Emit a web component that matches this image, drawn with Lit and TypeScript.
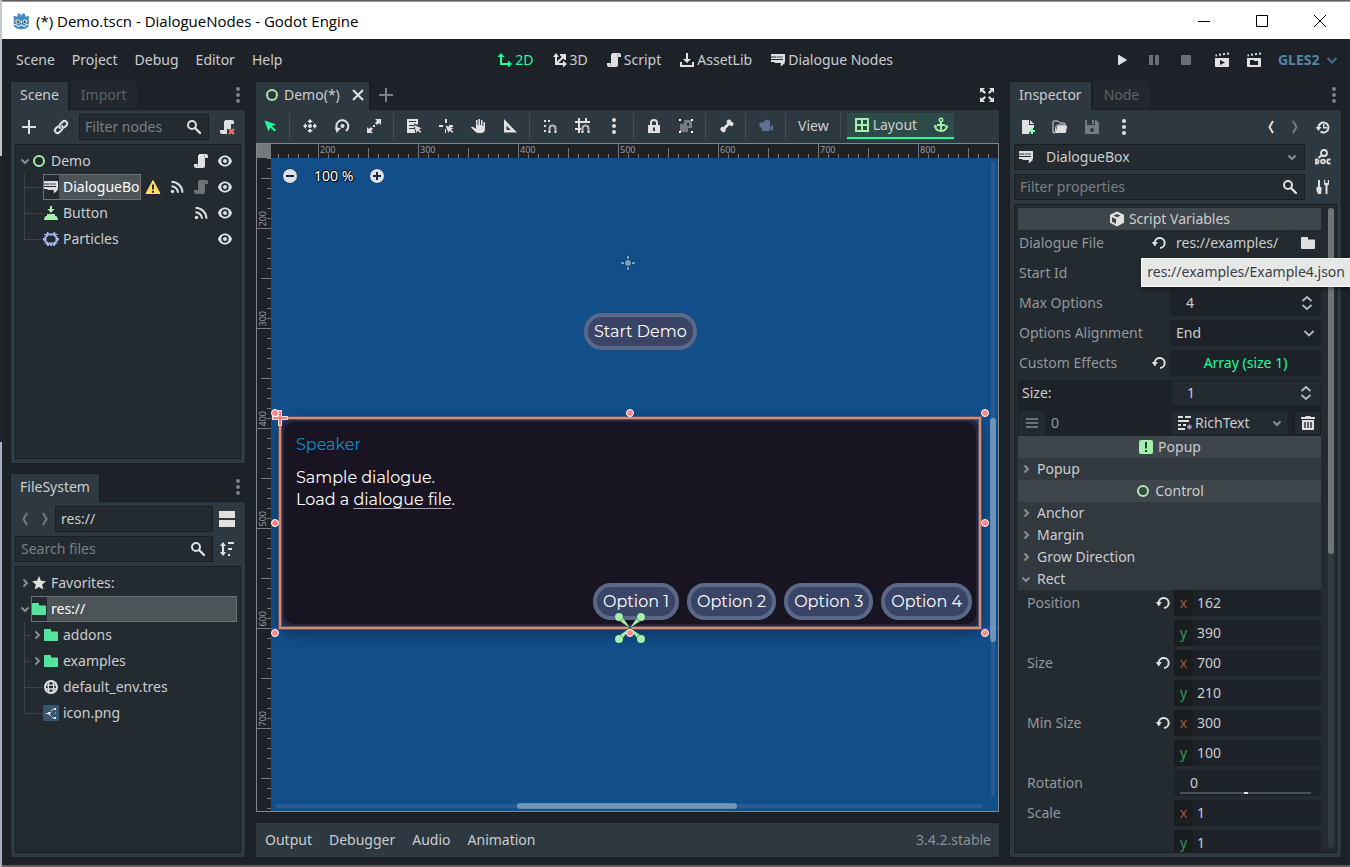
import { LitElement, html, svg, css, nothing, TemplateResult, SVGTemplateResult } from "lit";
import { customElement, state } from "lit/decorators.js";
import { classMap } from "lit/directives/class-map.js";

const W = "#e0e0e0";
const G = "#a5efac";

const icons: Record<string, SVGTemplateResult> = {
  plus: svg`<path d="M7 1h2v6h6v2H9v6H7V9H1V7h6z" fill=${W}/>`,
  link: svg`<g fill="none" stroke=${W} stroke-width="2" stroke-linecap="round"><path d="M7 9a2.6 2.6 0 0 1 0-3.600l2.600-2.600a2.600 2.600 0 0 1 3.700 3.700L11.500 8.200"/><path d="M9 7a2.600 2.600 0 0 1 0 3.600l-2.600 2.600a2.600 2.600 0 0 1-3.700-3.700l1.800-1.700"/></g>`,
  search: svg`<circle cx="6" cy="6" r="4" fill="none" stroke=${W} stroke-width="2"/><path d="M9 9l5 5" stroke=${W} stroke-width="2.400" stroke-linecap="round"/>`,
  script: svg`<path d="M6 1v1c-.550 0-1 .450-1 1v8H1v2c0 1.100.900 2 2 2h7c1.100 0 2-.900 2-2V5h3V3c0-1.100-.900-2-2-2z" fill=${W}/><path d="M11 2v3h1V3c0-.600.400-1 1-1zM4 11v2c0 .600-.400 1-1 1h2v-3z" fill="#a8abad"/>`,
  scriptRemove: svg`<path d="M6 1v1c-.550 0-1 .450-1 1v8H1v2c0 1.100.900 2 2 2h5v-5h4V5h3V3c0-1.100-.900-2-2-2z" fill=${W}/><path d="M10 10l5 5M15 10l-5 5" stroke="#ff7070" stroke-width="2"/>`,
  eye: svg`<path fill-rule="evenodd" d="M8 2.500C4.700 2.500 2 4.800 1 8c1 3.200 3.700 5.500 7 5.500s6-2.300 7-5.500c-1-3.200-3.700-5.500-7-5.500zm0 1.800a3.700 3.700 0 1 1 0 7.400 3.700 3.700 0 0 1 0-7.400z" fill=${W}/><circle cx="8" cy="8" r="2" fill=${W}/>`,
  signal: svg`<circle cx="3.500" cy="12.500" r="1.700" fill=${W}/><path d="M2 7.500a6.500 6.500 0 0 1 6.500 6.500M2 3a11 11 0 0 1 11 11" transform="translate(.5 -.2)" fill="none" stroke=${W} stroke-width="2"/>`,
  warning: svg`<path d="M8 1.500L15 14.500H1z" fill="#ffdd65" stroke="#ffdd65" stroke-linejoin="round"/><path d="M7 5.500h2v5H7zM7 11.700h2v2H7z" fill="#2a2f33"/>`,
  dialogue: svg`<path d="M1.500 2h13c.300 0 .500.200.500.500V10h-1l1 1-4.200 3.600V11H4.500V10H1V2.500c0-.300.200-.500.500-.500z" fill=${W}/><path d="M1 5h5M1 7.500h12" stroke="#23292f" stroke-width="1.200"/><path d="M6.500 5H13" stroke="#23292f" stroke-width=".8"/>`,
  button: svg`<path d="M7 1h2v3h2.500L8 8 4.500 4H7z" fill=${G}/><path d="M4 9h8v2H4zM2.500 11h11l1.500 3v1H1v-1z" fill=${G}/>`,
  ring: svg`<circle cx="8" cy="8" r="5" fill="none" stroke=${G} stroke-width="2"/>`,
  particles: svg`<path d="M4 3.500h8v1.500l1.500 1v4.500L12 11.500v1H4v-1L2.500 10.500V6L4 5z" fill="none" stroke="#a5b7f3" stroke-width="2"/><path d="M1 3h3V1h1.500v3H1zM15 3h-3V1h-1.500v3H15zM1 12h3v3h2v-2.500H1zM15 12h-3v3h-2v-2.500h5zM7 13h2v2H7zM0 7h2v2.500H0zM14 7h2v2.500h-2z" fill="#a5b7f3"/>`,
  down: svg`<path d="M4.500 6.500L8 10l3.500-3.500" fill="none" stroke="#8b8f93" stroke-width="2"/>`,
  right: svg`<path d="M6.500 4.500L10 8l-3.500 3.500" fill="none" stroke="#8b8f93" stroke-width="2"/>`,
  chevron: svg`<path d="M3.500 6L8 10.500 12.500 6" fill="none" stroke="#b8bbbd" stroke-width="1.800"/>`,
  star: svg`<path d="M8 1l2 4.700 5 .500-3.800 3.400 1.100 5L8 12l-4.300 2.600 1.100-5L1 6.200l5-.500z" fill=${W}/>`,
  folder: svg`<path d="M1 3c0-.600.400-1 1-1h5c.500 0 1 .400 1 1v1.500h6c.600 0 1 .400 1 1V13c0 .600-.400 1-1 1H2c-.600 0-1-.400-1-1z" fill="#55e3a0"/>`,
  folderWhite: svg`<path d="M1 3c0-.600.400-1 1-1h5c.500 0 1 .400 1 1v1.500h6c.600 0 1 .400 1 1V13c0 .600-.400 1-1 1H2c-.600 0-1-.400-1-1z" fill=${W}/>`,
  globe: svg`<circle cx="8" cy="8" r="6" fill="none" stroke=${W} stroke-width="2"/><ellipse cx="8" cy="8" rx="2.700" ry="6" fill="none" stroke=${W} stroke-width="1.300"/><path d="M2 6.200h12M2 10h12" stroke=${W} stroke-width="1.300"/>`,
  image: svg`<rect x="0" y="0" width="16" height="16" rx="1" fill="#355570"/><path d="M6 9l4-5h3M6 9l4 4h3M3 8.500h3" fill="none" stroke=${W} stroke-width="1" stroke-dasharray="3 1"/><path d="M5 7h2.500v2.500H5zM11 3h2v2h-2zM11 12h2v2h-2zM12 7.500h1v1h-1z" fill=${W}/>`,
  dots: svg`<circle cx="8" cy="2" r="2" fill=${W}/><circle cx="8" cy="8" r="2" fill=${W}/><circle cx="8" cy="14" r="2" fill=${W}/>`,
  back: svg`<path d="M10 2L6.500 8l3.500 6" fill="none" stroke=${W} stroke-width="2"/>`,
  forward: svg`<path d="M6 2l3.500 6L6 14" fill="none" stroke=${W} stroke-width="2"/>`,
  split: svg`<path d="M0 0h16v7H0zM0 9h16v7H0z" fill=${W}/>`,
  sort: svg`<path d="M4 1l3 4H5v6h2l-3 4-3-4h2V5H1zM9 1h6v2H9zM9 7h4v2H9zM9 13h2v2H9z" fill=${W}/>`,
  d2: svg`<path d="M4 1l3.500 4H5v6h6V8.500l4 3.500-4 3.500V13H3V5H.500z" fill="#1cff99"/>`,
  d3: svg`<path d="M4 1l3 4H5v4.500L9.700 5 8 3.300V2h6v6h-1.200L11.200 6.400 6.500 11H11V8.500l4 3.500-4 3.500V13H3V5H1z" fill=${W}/>`,
  assetlib: svg`<path d="M7 1h2v6h3l-4 4-4-4h3zM1 10h2v3h10v-3h2v5H1z" fill=${W}/>`,
  play: svg`<path d="M4 3.500c0-.600.600-.800 1-.500l7.500 4.500c.400.200.400.800 0 1L5 13c-.400.300-1 .100-1-.500z" fill=${W}/>`,
  pause: svg`<path d="M3 3h4v10H3zM9 3h4v10H9z" fill=${W}/>`,
  stop: svg`<rect x="3" y="3" width="10" height="10" rx="1" fill=${W}/>`,
  playScene: svg`<path fill-rule="evenodd" d="M1 6h14v8c0 .600-.400 1-1 1H2c-.600 0-1-.400-1-1zm5 2v5l5-2.500z" fill=${W}/><path d="M1.500 3.500l1.500-.300M5 2.800l2-.300M9 2.300l2-.300M13 1.700l2-.300" stroke=${W} stroke-width="2"/>`,
  playCustom: svg`<path fill-rule="evenodd" d="M1 6h14v8c0 .600-.400 1-1 1H2c-.600 0-1-.400-1-1zm3 2v5h8V9H8V8z" fill=${W}/><path d="M1.500 3.500l1.500-.300M5 2.800l2-.300M9 2.300l2-.300M13 1.700l2-.300" stroke=${W} stroke-width="2"/>`,
  close: svg`<path d="M3 3l10 10M13 3L3 13" stroke=${W} stroke-width="2"/>`,
  expand: svg`<path d="M1 1h5L4.300 2.700 7 5.400 5.400 7 2.700 4.300 1 6zM15 1v5l-1.700-1.700L10.600 7 9 5.400l2.700-2.700L10 1zM1 15v-5l1.700 1.700L5.400 9 7 10.600l-2.700 2.700L6 15zM15 15h-5l1.700-1.700L9 10.600 10.600 9l2.700 2.700L15 10z" fill=${W}/>`,
  select: svg`<path d="M2.500 2.500l4 11 1.800-4 4.200 4 1.500-1.500-4.200-4 4.200-1.500z" fill="#1cff99"/>`,
  move: svg`<circle cx="8" cy="8" r="2" fill=${W}/><path d="M8 1L5 4h2v1h2V4h2zM8 15l3-3H9v-1H7v1H5zM1 8l3 3V9h1V7H4V5zM15 8l-3-3v2h-1v2h1v2z" fill=${W}/>`,
  rotate: svg`<path d="M3.300 11.500A6 6 0 1 1 12 13" fill="none" stroke=${W} stroke-width="2"/><path d="M1 9.500l6 .5-4.500 5z" fill=${W}/><circle cx="8.500" cy="8" r="2" fill=${W}/>`,
  scale: svg`<path d="M9 1h6v6l-2-2-2 2-2-2 2-2zM7 15H1V9l2 2 2-2 2 2-2 2zM7 7h2v2H7z" fill=${W}/>`,
  listSelect: svg`<path fill-rule="evenodd" d="M1 1h11v6L8 5.500V7H3v1h5v2H3v1h5.500l.800 4H1zM3 3v1h7V3z" fill=${W}/><path d="M8 7l2.500 8 1.300-2.500L14 15l1.200-1.200-2.200-2.300 2.500-1.300z" fill=${W}/>`,
  pivot: svg`<path d="M7 1h2v4H7zM1 7h4v2H1zM11 7h4v2h-4zM7 11h1v4H7z" fill=${W}/><path d="M7.500 7.500l3 7.500 1.300-2.500L14 15l1.200-1.200-2.200-2.300 2.500-1.300z" fill=${W}/>`,
  pan: svg`<path d="M6 2h1.500v5h1V1H10v6h1V2h1.500v6h1V4H15v7c0 2.500-1.500 4-4 4H8.500C6 15 4.500 13 1 9.500c.500-1 2-1 3 0l2 1.200z" fill=${W}/>`,
  ruler: svg`<path fill-rule="evenodd" d="M2 1l13 13.500H2zm2.500 6.500V12h4.300z" fill=${W}/>`,
  snap: svg`<path d="M6 2h2v2H6zM2 2h2v2H2zM2 7h2v2H2zM2 12h2v2H2z" fill=${W}/><path d="M7.500 14v-3.500a3 3 0 0 1 6 0V14" fill="none" stroke="#b4b8ba" stroke-width="2"/><path d="M6.500 13h2v2h-2zM12.500 13h2v2h-2z" fill=${W}/>`,
  grid: svg`<path d="M4 0h2v3h5V0h2v3h3v2H6v5h1v2H6v3H4v-3H1v-2h3V5H1V3h3z" fill=${W}/><path d="M8.500 14v-3.500a3 3 0 0 1 6 0V14" fill="none" stroke="#b4b8ba" stroke-width="2"/><path d="M7.500 13h2v2h-2zM13.500 13h2v2h-2z" fill=${W}/>`,
  lock: svg`<path fill-rule="evenodd" d="M8 1a4 4 0 0 0-4 4v2H2v8h12V7h-2V5a4 4 0 0 0-4-4zm0 2c1.100 0 2 .900 2 2v2H6V5c0-1.100.900-2 2-2zM7 9.500h2V13H7z" fill=${W}/>`,
  group: svg`<path fill-rule="evenodd" d="M6 2h8v8h-4v4H2V6h4zm3 3v3h2V5z" fill="#777c80"/><path d="M1 1h2v2H1zM13 1h2v2h-2zM1 13h2v2H1zM13 13h2v2h-2z" fill="#fff"/>`,
  bone: svg`<path d="M10.500 1.500a2.200 2.200 0 0 1 2.800 2.200 2.200 2.200 0 1 1-1.800 3.300L7.500 11a2.200 2.200 0 1 1-3.800 2.300A2.200 2.200 0 1 1 5.500 9L9.300 5.200a2.200 2.200 0 0 1 1.200-3.700z" fill=${W}/>`,
  camera: svg`<g fill="#5f6f96"><circle cx="9" cy="5" r="3.200"/><circle cx="4" cy="7" r="2.700"/><path d="M4 6h8v6c0 .6-.4 1-1 1H5c-.6 0-1-.4-1-1z"/><path d="M12 9.500L15 7v6l-3-2z"/></g>`,
  layout: svg`<path fill-rule="evenodd" d="M1 1h14v14H1zm2 2v4h4V3zm6 0v4h4V3zM3 9v4h4V9zm6 0v4h4V9z" fill=${G}/>`,
  anchor: svg`<path fill-rule="evenodd" d="M8 .500a2.500 2.500 0 0 0-1 4.800V7H4v2h3v4c-2-.300-3.300-1.500-3.600-3L4.500 9.500 2 7.500l-1.500 3 1-.200C2 13.200 4.700 15 8 15s6-1.800 6.500-4.700l1 .200-1.500-3-2.500 2 1.100.500c-.300 1.500-1.600 2.700-3.600 3V9h3V7H9V5.300A2.500 2.500 0 0 0 8 .500zM8 2a1 1 0 1 1 0 2 1 1 0 0 1 0-2z" fill=${G}/>`,
  newFile: svg`<path d="M2 1h7v5h5v3h-3v2H9v3l1 1H2zM10 1l4 4h-4z" fill=${W}/><path d="M11 9h2v2h2v2h-2v2h-2v-2H9v-2h2z" fill="#84ffb1"/>`,
  load: svg`<path d="M1 13V3c0-.600.400-1 1-1h4l2 2h4c.600 0 1 .400 1 1v1H6c-1 0-1.500.300-2 1.500L3 14H2c-.600 0-1-.400-1-1z" fill="none" stroke=${W} stroke-width="1"/><path d="M5.500 6.500H14c1 0 1.200.300 1 1L14 13c-.200.700-.500 1-1 1H3.500z" fill=${W}/>`,
  save: svg`<path fill-rule="evenodd" d="M2 1h1v5h8V1h1l3 3v10c0 .600-.400 1-1 1H2c-.600 0-1-.400-1-1V2c0-.600.400-1 1-1zm6 8a2 2 0 1 0 0 4 2 2 0 0 0 0-4zM8 1h2v4H8z" fill=${W}/>`,
  history: svg`<path d="M3.500 8.500a5 5 0 1 1 2 4" fill="none" stroke=${W} stroke-width="2"/><path d="M.500 8h6l-3 4z" fill=${W}/><path d="M8 5h1.500v3H12v1.500H8z" fill=${W}/>`,
  doc: svg`<circle cx="9" cy="4" r="3" fill="none" stroke=${W} stroke-width="1.800"/><path d="M7 6L3.500 9" stroke=${W} stroke-width="2"/><path d="M1 10.500v4h1.300a1.700 1.700 0 0 0 1.200-2 1.700 1.700 0 0 0-1.200-2z" fill="none" stroke=${W} stroke-width="1.800"/><circle cx="8" cy="12.500" r="1.900" fill="none" stroke=${W} stroke-width="1.800"/><path d="M15.500 10.500h-1.500a1.800 2 0 0 0 0 4h1.500" fill="none" stroke=${W} stroke-width="1.800"/>`,
  tools: svg`<path d="M3 1h2v7h1.500v3.500L6 15H3l-1.500-3.500V8H3z" fill=${W}/><path d="M9 1v3.500c0 1 .500 1.700 1.500 2V15h2V6.500c1-.300 1.500-1 1.500-2V1h-1.200v3h-2.600V1z" fill=${W}/>`,
  cube: svg`<path fill-rule="evenodd" d="M8 .500l7 3.300v8L8 15.500l-7-3.700v-8zM3 6.200v4.600l4 2V8zM8 3L4.500 4.500 8 6.200l3.500-1.700z" fill=${W}/>`,
  reload: svg`<path d="M3.700 7.500A5 5 0 1 1 9 13" fill="none" stroke=${W} stroke-width="2"/><path d="M.800 7h6l-3 4.500z" fill=${W}/>`,
  updown: svg`<path d="M3.500 6L8 2l4.500 4M3.500 10L8 14l4.500-4" fill="none" stroke="#b8bbbd" stroke-width="1.800"/>`,
  richtext: svg`<path d="M1 1h5v2H1zM8 1h6v2H8zM1 5h11v2H1zM1 9h3v2H1zM6 9h3v2H6zM1 13h7v2H1z" fill=${W}/><path d="M12.500 9.500v5M10.300 10.700l4.400 2.600M14.700 10.700l-4.400 2.600" stroke="#bc8ee5" stroke-width="1.300"/>`,
  trash: svg`<path d="M5.500 1h5v1H15v2H1V2h4.500zM2 5h12v9c0 .600-.400 1-1 1H3c-.600 0-1-.400-1-1z" fill=${W}/><path d="M5 7v6M8 7v6M11 7v6" stroke="#23292f" stroke-width="1.400"/>`,
  popup: svg`<rect x="1" y="1" width="14" height="14" rx="2" fill=${G}/><path d="M7 3h2v6.500H7zM7 11h2v2H7z" fill="#2e3840"/>`,
  handle: svg`<path d="M2 3h12v2H2zM2 7h12v2H2zM2 11h12v2H2z" fill="#6d7276"/>`,
  zoomOut: svg`<circle cx="8" cy="8" r="7.500" fill="#0d355f"/><circle cx="8" cy="8" r="7" fill=${W}/><path d="M4 7h8v2H4z" fill="#0a2a4e"/>`,
  zoomIn: svg`<circle cx="8" cy="8" r="7.500" fill="#0d355f"/><circle cx="8" cy="8" r="7" fill=${W}/><path d="M4 7h3V4h2v3h3v2H9v3H7V9H4z" fill="#0a2a4e"/>`,
  godot: svg`<path d="M1 4.500l1.800-1.200 1.200.900.800-.300L5 1.500l2-.400.800 1.700h.900l.800-1.700 2 .400.200 2.400.8.300 1.200-.900L15.500 4.500l-.8 1.800.3 1.200V12c-1 2.500-3.700 3.400-6.700 3.400S2.500 14.500 1.500 12V7.500l.3-1.200z" fill="#478cbf"/><circle cx="5" cy="8.500" r="1.900" fill="#fff"/><circle cx="11.500" cy="8.500" r="1.900" fill="#fff"/><circle cx="5.200" cy="8.600" r="1.100" fill="#414042"/><circle cx="11.300" cy="8.600" r="1.100" fill="#414042"/><path d="M7.800 7.800h1v2.200h-1z" fill="#fff"/><path d="M1.500 11l3 .4.300 1.300h2l.3-1h2.400l.3 1h2l.3-1.300 3-.4" fill="none" stroke="#fff" stroke-width=".8"/>`,
};

const icon = (name: string, size = 16): TemplateResult =>
  html`<svg class="icon" width=${size} height=${size} viewBox="0 0 16 16" aria-hidden="true">${icons[name]}</svg>`;

interface TreeItem {
  label: string;
  icon: string;
  level?: number;
  arrow?: "down" | "right";
  selected?: boolean;
  last?: boolean;
  actions?: { icon: string; label: string; dim?: boolean }[];
}

const eye = { icon: "eye", label: "Toggle Visibility" };

const sceneTree: TreeItem[] = [
  { label: "Demo", icon: "ring", arrow: "down", actions: [{ icon: "script", label: "Open Script" }, eye] },
  {
    label: "DialogueBo", icon: "dialogue", level: 1, selected: true,
    actions: [
      { icon: "warning", label: "Warnings" },
      { icon: "signal", label: "Signals" },
      { icon: "script", label: "Open Script", dim: true },
      eye,
    ],
  },
  { label: "Button", icon: "button", level: 1, actions: [{ icon: "signal", label: "Signals" }, eye] },
  { label: "Particles", icon: "particles", level: 1, last: true, actions: [eye] },
];

const fileTree: TreeItem[] = [
  { label: "Favorites:", icon: "star", arrow: "right" },
  { label: "res://", icon: "folder", arrow: "down", selected: true },
  { label: "addons", icon: "folder", level: 1, arrow: "right" },
  { label: "examples", icon: "folder", level: 1, arrow: "right" },
  { label: "default_env.tres", icon: "globe", level: 1 },
  { label: "icon.png", icon: "image", level: 1, last: true },
];

const tools: (string | null)[] = [
  "select", null, "move", "rotate", "scale", null, "listSelect", "pivot", "pan", "ruler", null,
  "snap", "grid", "dots", null, "lock", "group", null, "bone", null, "camera", null,
];

// Scene coordinate at the canvas' top-left corner.
const ORIGIN = { x: 153, y: 130 };

@customElement("app-root")
export class AppRoot extends LitElement {
  @state() private options = ["Option 1", "Option 2", "Option 3", "Option 4"];
  @state() private canvasSize = { w: 0, h: 0 };
  private observer?: ResizeObserver;

  firstUpdated() {
    const canvas = this.renderRoot.querySelector(".canvas") as HTMLElement;
    const measure = () => {
      if (canvas.clientWidth !== this.canvasSize.w || canvas.clientHeight !== this.canvasSize.h) {
        this.canvasSize = { w: canvas.clientWidth, h: canvas.clientHeight };
      }
    };
    measure();
    this.observer = new ResizeObserver(measure);
    this.observer.observe(canvas);
  }

  disconnectedCallback() {
    super.disconnectedCallback();
    this.observer?.disconnect();
  }

  static styles = css`
    :host {
      --base: #2e3840;
      --panel: #232a30;
      --dark: #1d2228;
      --edge: #191e22;
      --text: #cbcdcf;
      --dim: #94989b;
      --accent: #1cff99;
      display: block;
      font: 14px/20px "Noto Sans", "Open Sans", sans-serif;
      color: var(--text);
    }
    * { box-sizing: border-box; }
    button, input, select { font: inherit; color: inherit; margin: 0; padding: 0; border: 0; background: none; border-radius: 0; outline: none; min-width: 0; }
    select { appearance: none; }
    .icon { display: block; flex: none; }

    .screen { height: 100vh; display: flex; overflow: hidden; background: #5b5f63; position: relative; }
    .desktop { width: 2px; flex: none; background: linear-gradient(#c3c5c8 0 18%, #20252a 18% 51%, #aab0bc 51%); }
    .window { flex: 1; min-width: 0; display: flex; flex-direction: column; margin-top: 1px; margin-bottom: 2px; background: var(--dark); border-top: 1px solid #999; }

    .titlebar { height: 37px; flex: none; display: flex; align-items: center; background: #fff; color: #000; font: 15px/20px "Segoe UI", "Open Sans", sans-serif; padding: 0 1px 0 10px; }
    .titlebar h1 { font: inherit; margin: 0 auto 0 6px; }
    .titlebar button { width: 58px; height: 36px; display: grid; place-items: center; }

    .menubar { height: 42px; flex: none; display: flex; justify-content: space-between; align-items: center; padding: 0 12px 0 14px; }
    .menubar nav, .modes, .playback { display: flex; align-items: center; }
    .menubar nav { gap: 17px; }
    .modes { gap: 18px; }
    .modes button { display: flex; align-items: center; gap: 2px; }
    .modes .on { color: var(--accent); }
    .playback { gap: 4px; }
    .playback button { width: 28px; display: grid; place-items: center; }
    .playback .faded { opacity: .4; }
    .playback .spaced { margin-left: 4px; }
    .renderer { display: grid; align-items: center; color: #5085a5; font-weight: 700; margin-left: 6px; width: 60px; }
    .renderer > * { grid-area: 1 / 1; }
    .renderer .icon { justify-self: end; opacity: .6; }

    .workspace { flex: 1; min-height: 0; display: grid; grid-template-columns: 236px minmax(0, 1fr) 333px; column-gap: 9px; padding: 0 8px 7px 8px; }
    .column { display: flex; flex-direction: column; gap: 9px; min-height: 0; min-width: 0; }
    .dock { flex: 1 1 0; min-height: 0; display: flex; flex-direction: column; }
    .dock + .dock { flex-basis: 2px; }
    .tabs { display: flex; height: 29px; margin-bottom: -1px; flex: none; align-items: stretch; z-index: 1; gap: 2px; }
    .tab { padding: 0 9px 2px; border: 1px solid var(--edge); border-bottom: 0; background: var(--base); display: flex; align-items: center; }
    .tab.off { background: #22282d; color: #5e6367; border-color: transparent; margin-bottom: 1px; padding-bottom: 1px; }
    .tabs .more { margin-left: auto; width: 16px; display: grid; place-items: center; padding-bottom: 1px; opacity: .5; }
    .panel { flex: 1; min-height: 0; display: flex; flex-direction: column; gap: 4px; padding: 4px; border: 1px solid var(--edge); background: var(--base); }

    .bar { display: flex; gap: 4px; height: 26px; flex: none; align-items: stretch; }
    .bar.tight { gap: 0; }
    .tool { width: 28px; flex: none; display: grid; place-items: center; }
    .tool.slim { width: 20px; }
    .faded { opacity: .4; }
    .push { margin-left: auto; }
    .field { flex: 1; min-width: 0; display: flex; align-items: center; background: var(--panel); border: 1px solid var(--edge); padding: 0 6px 0 5px; }
    .field input { flex: 1; width: 0; }
    .field input::placeholder { color: #7b8084; opacity: 1; }

    .tree { flex: 1; min-height: 0; overflow: hidden; background: var(--panel); border: 1px solid var(--edge); padding: 3px; margin: 0; list-style: none; }
    .row { height: 26px; display: flex; align-items: center; position: relative; }
    .row.child { padding-left: 12px; }
    .row.child::before { content: ""; position: absolute; left: 5px; top: 0; width: 18px; height: 13px; border: solid #3c4449; border-width: 0 0 1px 1px; }
    .row.child.arrowed::before { width: 6px; }
    .row.child.more::after { content: ""; position: absolute; left: 5px; top: 0; height: 26px; border-left: 1px solid #3c4449; }
    .arrow { width: 12px; flex: none; }
    .arrow .icon { margin: 0 -2px; }
    .cell { flex: 1; min-width: 0; height: 26px; display: flex; align-items: center; overflow: hidden; white-space: nowrap; }
    .cell .label { flex: 1; padding-left: 4px; line-height: 24px; overflow: hidden; }
    .cell.selected { border: 1px solid #6b7174; color: #fff; }
    .cell.selected .icon { margin-left: -1px; }
    .cell.selected .label { background: #4c5457; }
    .row button { width: 24px; display: grid; place-items: center; }

    .center .tab { gap: 4px; padding-left: 8px; padding-right: 3px; }
    .center .tab .icon:last-child { margin-left: 6px; }
    .center .tabs .more { opacity: 1; width: 26px; }
    .center .addtab { width: 28px; display: grid; place-items: center; padding-bottom: 2px; opacity: .5; }
    .editor { flex: 1; min-height: 0; display: flex; flex-direction: column; border: 1px solid var(--edge); background: var(--base); }
    .toolbar { display: flex; gap: 4px; padding: 3px 0 4px; height: 33px; flex: none; }
    .sep { width: 3px; flex: none; border-left: 1px solid #454e55; margin-left: 1px; }
    .toolbar .view { padding: 0 6px; }
    .layout { display: flex; align-items: center; background: #2c4b49; border-bottom: 2px solid var(--accent); }
    .layout button { display: flex; align-items: center; gap: 3px; padding: 0 7px; height: 24px; }
    .layout button + button { padding: 0 5px 0 9px; }

    .viewport { flex: 1; min-height: 0; display: grid; grid-template: 14px minmax(0, 1fr) / 14px minmax(0, 1fr); border: 1px solid #80868b; background: var(--dark); }
    .corner { background: #75797d; }
    .ruler { width: 100%; height: 100%; display: block; overflow: hidden; min-width: 0; min-height: 0; font-size: 9px; }
    .canvas { position: relative; overflow: hidden; background: #124f8a; min-width: 0; min-height: 0; }
    .overlay { position: absolute; inset: 0; width: 100%; height: 100%; pointer-events: none; }
    .zoom { position: absolute; left: 11px; top: 8px; display: flex; align-items: center; gap: 16px; color: #fff; text-shadow: 1px 1px 1px #000, -1px 0 1px #000, 0 -1px 1px #000; }
    .game { font: 16px/22px Montserrat, Inter, sans-serif; color: #fff; }
    .pill { height: 37px; border: 4px solid #5a6988; border-radius: 18px; background: #3a4466; padding: 0 6px; }
    .start { position: absolute; left: 313px; top: 155px; }
    .dialogue { position: absolute; left: 9px; top: 260px; width: 700px; height: 210px; display: flex; flex-direction: column; border: 4px solid #222640; border-radius: 14px; background: #191422; padding: 4px; box-shadow: 0 5px 14px 2px rgba(12, 30, 62, .55); }
    .dialogue h2 { font: inherit; color: #0c8ecf; margin: 0 0 11px; padding: 8px 8px 0; }
    .dialogue p { margin: 0; padding: 0 8px; }
    .dialogue a { color: inherit; text-decoration: underline 1px rgba(255, 255, 255, .6); text-underline-offset: 3px; }
    .options { margin-top: auto; display: flex; justify-content: flex-end; gap: 8px; }

    .bottom { height: 36px; flex: none; display: flex; align-items: center; gap: 17px; padding: 0 8px 0 9px; border: 1px solid var(--edge); background: var(--base); }
    .bottom span { margin-left: auto; color: #8a9095; }

    .picker { flex: 1; min-width: 0; display: grid; grid-template-columns: 27px 1fr 16px; align-items: center; background: var(--panel); border: 1px solid var(--edge); padding: 0 4px 0 3px; }
    .picker select { grid-area: 1 / 1 / 2 / 4; padding-left: 28px; height: 24px; width: 100%; }
    .picker .icon { pointer-events: none; grid-area: 1 / 1; }
    .picker .icon + .icon { grid-area: 1 / 3; }

    .inspector { flex: 1; min-height: 0; overflow: hidden; display: flex; background: var(--panel); border: 1px solid var(--edge); padding: 3px 2px 0 3px; gap: 7px; }
    .props { flex: 1; min-width: 0; }
    .scroll { width: 6px; flex: none; background: #31383e; border-radius: 3px; margin-bottom: 4px; }
    .scroll i { display: block; height: 346px; border-radius: 3px; background: #6f7477; }
    .class { height: 22px; display: flex; align-items: center; justify-content: center; gap: 4px; background: #3e454b; }
    .group { width: 100%; height: 22px; display: flex; align-items: center; gap: 3px; background: #31383e; }
    .prop { display: grid; grid-template-columns: minmax(0, 1fr) 151px; height: 26px; align-items: center; color: var(--dim); }
    .prop + .prop { margin-top: 4px; }
    .prop > label, .prop > .name { display: flex; align-items: center; justify-content: space-between; padding: 0 3px 0 1px; }
    .prop.sub { grid-template-columns: minmax(0, 1fr) 147px; }
    .prop.sub > label, .prop.sub > .name { padding: 0 3px 0 9px; }
    .value { height: 26px; display: flex; align-items: center; background: var(--dark); color: var(--text); }
    .value input { flex: 1; width: 0; height: 26px; padding: 0 0 2px 6px; }
    .value.num input { padding-left: 16px; }
    .value.num { padding-right: 6px; }
    .value.pair { background: none; gap: 6px; }
    .value.pair .box { flex: 1; min-width: 0; height: 24px; display: flex; align-items: center; border: 1px solid #1f252a; margin-left: 1px; }
    .value.pair .box input { padding-left: 4px; }
    .value.pair .tool { height: 24px; width: 27px; border: 1px solid #1f252a; }
    .value .axis { width: 19px; height: 26px; flex: none; text-align: center; background: #191d20; line-height: 26px; }
    .axis.x { color: #a5533b; }
    .axis.y { color: #2f9a5a; }
    .value .axis + input { padding-left: 4px; }
    .drop { flex: 1; display: grid; grid-template-columns: 1fr 20px; align-items: center; }
    .drop > select { grid-area: 1 / 1 / 2 / 3; padding-left: 6px; height: 26px; }
    .drop > .icon { grid-area: 1 / 2; pointer-events: none; }
    .array { justify-content: center; width: 100%; color: var(--accent); }
    .elements { margin-top: 4px; background: var(--dark); }
    .elements .prop > label { color: var(--text); padding-left: 4px; }
    .elements .value.num { background: var(--panel); border: 1px solid #1f252a; margin-left: 2px; height: 25px; margin-right: 1px; padding-right: 5px; }
    .elements .value.num input { height: 23px; padding-left: 14px; }
    .elements .name { justify-content: flex-start; gap: 6px; }
    .elements .grip { width: 26px; height: 24px; background: var(--panel); display: grid; place-items: center; }
    .elements .box, .elements .value .tool { background: var(--panel); border-color: #191d20; }
    .elements .box { padding: 0 2px 0 5px; }
    .elements .box select { flex: 1; padding-left: 2px; }
    .elements .box .icon { pointer-events: none; }
    .slider { display: grid; align-items: center; flex: 1; }
    .slider > * { grid-area: 1 / 1; }
    .slider input[type="text"] { width: 100%; padding-left: 16px; }
    .slider input[type="range"] { appearance: none; align-self: end; width: auto; height: 2px; flex: none; margin: 0 10px 2px 6px; background: #4a4f53; padding: 0; }
    input[type="range"]::-webkit-slider-thumb { appearance: none; width: 4px; height: 2px; background: #e0e0e0; border: 0; }

    .tooltip { position: absolute; right: 0; top: 258px; border: 1px solid #fff; border-right: 0; background: #e6e8e8; color: #3c3e40; padding: 3px 5px 4px; line-height: 20px; box-shadow: 0 2px 4px rgba(0, 0, 0, .4); }
  `;

  private row(t: TreeItem) {
    const cls = { row: true, child: !!t.level, more: !!t.level && !t.last, arrowed: !!t.arrow };
    return html`<li class=${classMap(cls)}>
      <span class="arrow">${t.arrow ? icon(t.arrow) : nothing}</span>
      <span class=${classMap({ cell: true, selected: !!t.selected })}>${icon(t.icon)}<span class="label">${t.label}</span></span>
      ${(t.actions ?? []).map((a) => html`<button class=${a.dim ? "faded" : ""} aria-label=${a.label}>${icon(a.icon)}</button>`)}
    </li>`;
  }

  private ticks(origin: number, length: number) {
    const first = Math.ceil(origin / 10) * 10;
    const count = Math.max(0, Math.ceil((origin + length - first) / 10));
    return Array.from({ length: count }, (_, i) => {
      const value = first + i * 10;
      const major = value % 100 === 0;
      return { value, major, at: value - origin + 0.5, start: major ? 0 : value % 50 === 0 ? 4 : 10 };
    });
  }

  private hRuler() {
    const { w } = this.canvasSize;
    return this.ticks(ORIGIN.x, w).map((t) => svg`<path d="M${t.at} ${t.start}V14" stroke="#75797d"/>${
      t.major && t.at < w - 20 ? svg`<text x=${t.at + 1.5} y="9" fill="#989c9f">${t.value}</text>` : nothing}`);
  }

  private vRuler() {
    return this.ticks(ORIGIN.y, this.canvasSize.h).map((t) => svg`<path d="M${t.start} ${t.at}H14" stroke="#75797d"/>${
      t.major && t.at > 20 ? svg`<text transform="translate(9 ${t.at - 2}) rotate(-90)" fill="#989c9f">${t.value}</text>` : nothing}`);
  }

  private handles() {
    const pts = [[4, 255], [359, 255], [714, 255], [4, 365], [714, 365], [4, 475], [359, 475], [714, 475]];
    const pin = (dx: number, dy: number) => svg`<path d="M359 470L${359 + dx * 9} ${470 + dy * 13}L${359 + dx * 13} ${470 + dy * 9}Z"/><circle cx=${359 + dx * 11} cy=${470 + dy * 11} r="4"/>`;
    return svg`
      <path d="M0 470.500H9M709 470.500H726" stroke="#4a4bb8"/>
      <rect x="9" y="260" width="700" height="210" fill="none" stroke="#5d5364" stroke-width="4"/>
      <rect x="9" y="260" width="700" height="210" fill="none" stroke="#db8d68" stroke-width="2"/>
      <path d="M9 252V268M1 260H17" stroke="#f4dede" stroke-width="4"/>
      <path d="M9 253V267M2 260H16" stroke="#ff7a80" stroke-width="2"/>
      <g fill="#a5efac" stroke="#1c3c3c" stroke-width="1" paint-order="stroke">${pin(-1, -1)}${pin(1, -1)}${pin(-1, 1)}${pin(1, 1)}</g>
      ${pts.map(([x, y]) => svg`<circle cx=${x} cy=${y} r="3.500" fill="#ff8484" stroke="#fff" stroke-width="1"/>`)}
      <g fill="#7f9fc2" stroke="#0c3b6b" stroke-width="1.500" paint-order="stroke"><circle cx="357" cy="105" r="3"/><path d="M356 98h2v3h-2zM356 109h2v3h-2zM350 104h3v2h-3zM361 104h3v2h-3z"/></g>
      <rect x="720" y="4" width="4" height="634" rx="2" fill="#fff" fill-opacity=".08"/>
      <rect x="719" y="260" width="6" height="224" rx="3" fill="#fff" fill-opacity=".35"/>
      <rect x="4" y="646" width="708" height="4" rx="2" fill="#fff" fill-opacity=".08"/>
      <rect x="246" y="645" width="220" height="6" rx="3" fill="#fff" fill-opacity=".35"/>`;
  }

  private vector(name: string, x: string, y: string, reset: boolean) {
    const id = name.replace(" ", "");
    return html`
      <div class="prop sub">
        <label for="${id}x">${name}${reset ? icon("reload") : nothing}</label>
        <div class="value"><span class="axis x">x</span><input id="${id}x" .value=${x} /></div>
      </div>
      <div class="prop sub">
        <span class="name"></span>
        <div class="value"><span class="axis y">y</span><input aria-label="${name} y" .value=${y} /></div>
      </div>`;
  }

  private group(name: string, open = false) {
    return html`<button class="group">${icon(open ? "down" : "right")}${name}</button>`;
  }

  render() {
    return html`
      <div class="screen">
        <div class="desktop"></div>
        <div class="window">
          <header class="titlebar">
            ${icon("godot", 18)}
            <h1>(*) Demo.tscn - DialogueNodes - Godot Engine</h1>
            <button aria-label="Minimize"><svg width="12" height="12"><path d="M0 6.500h12" stroke="#000" /></svg></button>
            <button aria-label="Maximize"><svg width="12" height="12"><path d="M.5.500h11v11H.500z" fill="none" stroke="#000" /></svg></button>
            <button aria-label="Close"><svg width="12" height="12"><path d="M0 0l12 12M12 0L0 12" stroke="#000" /></svg></button>
          </header>

          <div class="menubar">
            <nav>${["Scene", "Project", "Debug", "Editor", "Help"].map((m) => html`<button>${m}</button>`)}</nav>
            <div class="modes">
              <button class="on">${icon("d2")}2D</button>
              <button>${icon("d3")}3D</button>
              <button>${icon("script")}Script</button>
              <button>${icon("assetlib")}AssetLib</button>
              <button>${icon("dialogue")}Dialogue Nodes</button>
            </div>
            <div class="playback">
              <button aria-label="Play">${icon("play")}</button>
              <button class="faded" aria-label="Pause">${icon("pause")}</button>
              <button class="faded" aria-label="Stop">${icon("stop")}</button>
              <button class="spaced" aria-label="Play Scene">${icon("playScene")}</button>
              <button aria-label="Play Custom Scene">${icon("playCustom")}</button>
              <div class="renderer">
                <select aria-label="Renderer"><option>GLES2</option></select>
                <svg class="icon" width="12" height="12" viewBox="0 0 12 12"><path d="M1.500 4L6 8.500 10.500 4" fill="none" stroke="#5ba4cf" stroke-width="2" /></svg>
              </div>
            </div>
          </div>

          <main class="workspace">
            <div class="column">
              <section class="dock">
                <div class="tabs">
                  <button class="tab">Scene</button>
                  <button class="tab off">Import</button>
                  <button class="more" aria-label="Dock menu">${icon("dots")}</button>
                </div>
                <div class="panel">
                  <div class="bar">
                    <button class="tool" aria-label="Add Node">${icon("plus")}</button>
                    <button class="tool" aria-label="Instance Scene">${icon("link")}</button>
                    <div class="field"><input aria-label="Filter nodes" placeholder="Filter nodes" />${icon("search")}</div>
                    <button class="tool" aria-label="Detach Script">${icon("scriptRemove")}</button>
                  </div>
                  <ul class="tree">${sceneTree.map((t) => this.row(t))}</ul>
                </div>
              </section>
              <section class="dock">
                <div class="tabs">
                  <button class="tab">FileSystem</button>
                  <button class="more" aria-label="Dock menu">${icon("dots")}</button>
                </div>
                <div class="panel">
                  <div class="bar tight">
                    <button class="tool slim faded" aria-label="Back">${icon("back")}</button>
                    <button class="tool slim faded" aria-label="Forward">${icon("forward")}</button>
                    <div class="field"><input aria-label="Path" .value=${"res://"} /></div>
                    <button class="tool" aria-label="Toggle Split">${icon("split")}</button>
                  </div>
                  <div class="bar tight">
                    <div class="field"><input aria-label="Search files" placeholder="Search files" />${icon("search")}</div>
                    <button class="tool" aria-label="Sort">${icon("sort")}</button>
                  </div>
                  <ul class="tree">${fileTree.map((t) => this.row(t))}</ul>
                </div>
              </section>
            </div>

            <div class="column center">
              <section class="dock">
                <div class="tabs">
                  <button class="tab">${icon("ring")}Demo(*)${icon("close")}</button>
                  <button class="addtab" aria-label="New Scene">${icon("plus")}</button>
                  <button class="more" aria-label="Distraction Free">${icon("expand")}</button>
                </div>
                <div class="editor">
                  <div class="toolbar">
                    ${tools.map((t) => (t ? html`<button class="tool" aria-label=${t}>${icon(t)}</button>` : html`<span class="sep"></span>`))}
                    <button class="view">View</button>
                    <span class="sep"></span>
                    <div class="layout">
                      <button>${icon("layout")}Layout</button>
                      <button aria-label="Anchors">${icon("anchor")}</button>
                    </div>
                  </div>
                  <div class="viewport">
                    <div class="corner"></div>
                    <svg class="ruler">${this.hRuler()}</svg>
                    <svg class="ruler">${this.vRuler()}</svg>
                    <div class="canvas">
                      <button class="pill start game">Start Demo</button>
                      <div class="dialogue game">
                        <h2>Speaker</h2>
                        <p>Sample dialogue.</p>
                        <p>Load a <a href="#file">dialogue file</a>.</p>
                        <div class="options">${this.options.map((o) => html`<button class="pill">${o}</button>`)}</div>
                      </div>
                      <svg class="overlay">${this.handles()}</svg>
                      <div class="zoom">
                        <button aria-label="Zoom Out">${icon("zoomOut")}</button>
                        <span>100 %</span>
                        <button aria-label="Zoom In">${icon("zoomIn")}</button>
                      </div>
                    </div>
                  </div>
                </div>
              </section>
              <footer class="bottom">
                ${["Output", "Debugger", "Audio", "Animation"].map((m) => html`<button>${m}</button>`)}
                <span>3.4.2.stable</span>
              </footer>
            </div>

            <div class="column">
              <section class="dock">
                <div class="tabs">
                  <button class="tab">Inspector</button>
                  <button class="tab off">Node</button>
                  <button class="more" aria-label="Dock menu">${icon("dots")}</button>
                </div>
                <div class="panel">
                  <div class="bar">
                    <button class="tool" aria-label="New Resource">${icon("newFile")}</button>
                    <button class="tool" aria-label="Load Resource">${icon("load")}</button>
                    <button class="tool faded" aria-label="Save Resource">${icon("save")}</button>
                    <button class="tool" aria-label="More">${icon("dots")}</button>
                    <button class="tool slim push" aria-label="Previous">${icon("back")}</button>
                    <button class="tool slim faded" aria-label="Next">${icon("forward")}</button>
                    <button class="tool" aria-label="History">${icon("history")}</button>
                  </div>
                  <div class="bar">
                    <div class="picker">
                      <select aria-label="Edited object"><option>DialogueBox</option></select>
                      ${icon("dialogue")}${icon("down")}
                    </div>
                    <button class="tool" aria-label="Documentation">${icon("doc")}</button>
                  </div>
                  <div class="bar">
                    <div class="field"><input aria-label="Filter properties" placeholder="Filter properties" />${icon("search")}</div>
                    <button class="tool" aria-label="Object tools">${icon("tools")}</button>
                  </div>
                  <div class="inspector">
                    <div class="props">
                      <div class="class">${icon("cube")}Script Variables</div>
                      <div class="prop">
                        <label for="file">Dialogue File${icon("reload")}</label>
                        <div class="value pair"><span class="box"><input id="file" .value=${"res://examples/"} /></span><button class="tool" aria-label="Browse">${icon("folderWhite")}</button></div>
                      </div>
                      <div class="prop">
                        <label for="start">Start Id</label>
                        <div class="value"><input id="start" .value=${"START"} /></div>
                      </div>
                      <div class="prop">
                        <label for="max">Max Options</label>
                        <div class="value num"><input id="max" .value=${"4"} />${icon("updown")}</div>
                      </div>
                      <div class="prop">
                        <label for="align">Options Alignment</label>
                        <div class="value"><span class="drop"><select id="align"><option>End</option></select>${icon("chevron")}</span></div>
                      </div>
                      <div class="prop">
                        <span class="name">Custom Effects${icon("reload")}</span>
                        <button class="value array">Array (size 1)</button>
                      </div>
                      <div class="elements">
                        <div class="prop">
                          <label for="size">Size:</label>
                          <div class="value num"><input id="size" .value=${"1"} />${icon("updown")}</div>
                        </div>
                        <div class="prop">
                          <span class="name"><span class="grip">${icon("handle")}</span>0</span>
                          <div class="value pair"><span class="box">${icon("richtext")}<select aria-label="Element 0"><option>RichText</option></select>${icon("down")}</span><button class="tool" aria-label="Remove">${icon("trash")}</button></div>
                        </div>
                      </div>
                      <div class="class">${icon("popup")}Popup</div>
                      ${this.group("Popup")}
                      <div class="class">${icon("ring")}Control</div>
                      ${this.group("Anchor")}${this.group("Margin")}${this.group("Grow Direction")}${this.group("Rect", true)}
                      ${this.vector("Position", "162", "390", true)}
                      ${this.vector("Size", "700", "210", true)}
                      ${this.vector("Min Size", "300", "100", true)}
                      <div class="prop sub">
                        <label for="rot">Rotation</label>
                        <div class="value"><span class="slider"><input type="text" id="rot" .value=${"0"} /><input type="range" min="-360" max="360" .value=${"0"} aria-label="Rotation slider" /></span></div>
                      </div>
                      ${this.vector("Scale", "1", "1", false)}
                    </div>
                    <div class="scroll"><i></i></div>
                  </div>
                </div>
              </section>
            </div>
          </main>
        </div>
        <div class="tooltip" role="tooltip">res://examples/Example4.json</div>
      </div>
    `;
  }
}
